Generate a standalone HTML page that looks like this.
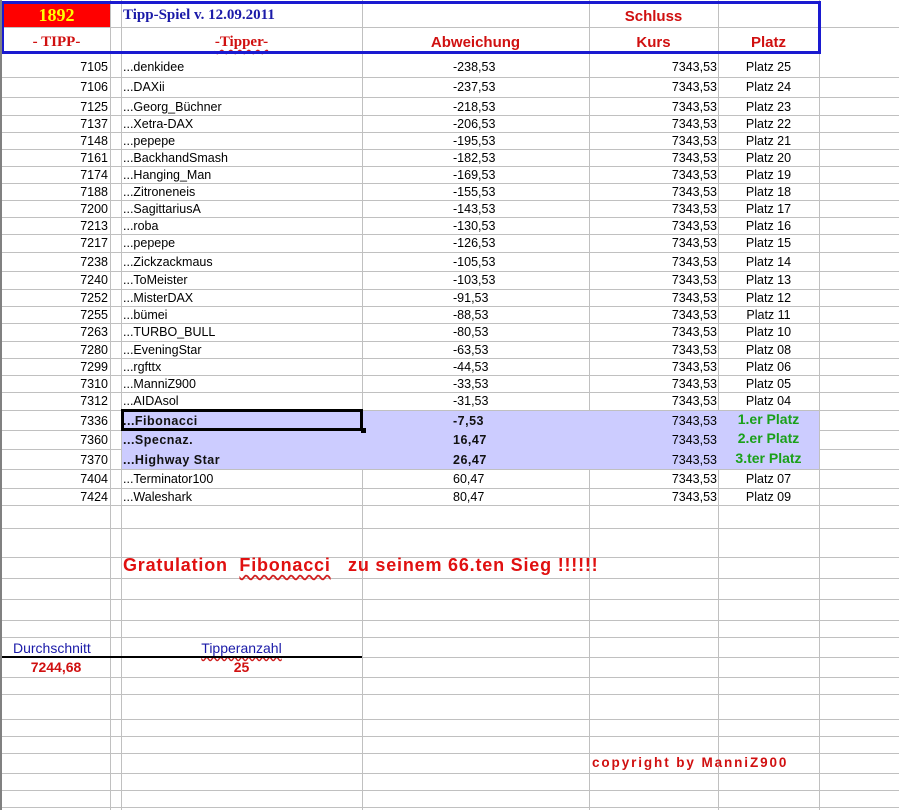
<!DOCTYPE html>
<html><head><meta charset="utf-8"><style>
*{margin:0;padding:0;box-sizing:border-box}
body{width:899px;height:810px;background:#fff;position:relative;overflow:hidden;font-family:"Liberation Sans",Arial,sans-serif;font-size:12.5px;color:#000}
.h{position:absolute;left:0;width:899px;height:1px;background:#c0c0c0}
.v{position:absolute;top:0;height:810px;width:1px;background:#c0c0c0}
.t{position:absolute;white-space:nowrap}
.row{position:absolute;left:0;width:899px}
.row .a{position:absolute;right:791px;text-align:right}
.row .b{position:absolute;left:123px}
.row .c{position:absolute;left:453px}
.row .d{position:absolute;right:182px;text-align:right}
.row .e{position:absolute;left:718px;width:101px;text-align:center}
.hl{background:#ccccff}
.bd{font-weight:bold;font-size:12.5px;letter-spacing:0.5px;color:#111}
.g{color:#1aa01a;font-weight:bold;font-size:14px}
.wavy{text-decoration:underline wavy #d02020;text-underline-offset:3px}
</style></head><body>
<div class="h" style="top:27px"></div>
<div class="h" style="top:77px"></div><div class="h" style="top:97px"></div><div class="h" style="top:115px"></div><div class="h" style="top:132px"></div><div class="h" style="top:149px"></div><div class="h" style="top:166px"></div><div class="h" style="top:183px"></div><div class="h" style="top:200px"></div><div class="h" style="top:217px"></div><div class="h" style="top:234px"></div><div class="h" style="top:252px"></div><div class="h" style="top:271px"></div><div class="h" style="top:289px"></div><div class="h" style="top:306px"></div><div class="h" style="top:323px"></div><div class="h" style="top:341px"></div><div class="h" style="top:358px"></div><div class="h" style="top:375px"></div><div class="h" style="top:392px"></div><div class="h" style="top:410px"></div><div class="h" style="top:430px"></div><div class="h" style="top:449px"></div><div class="h" style="top:469px"></div><div class="h" style="top:488px"></div><div class="h" style="top:505px"></div><div class="h" style="top:528px"></div><div class="h" style="top:557px"></div><div class="h" style="top:578px"></div><div class="h" style="top:599px"></div><div class="h" style="top:620px"></div><div class="h" style="top:637px"></div><div class="h" style="top:657px"></div><div class="h" style="top:677px"></div><div class="h" style="top:694px"></div><div class="h" style="top:719px"></div><div class="h" style="top:736px"></div><div class="h" style="top:753px"></div><div class="h" style="top:773px"></div><div class="h" style="top:790px"></div><div class="h" style="top:807px"></div>
<div class="v" style="left:110px"></div><div class="v" style="left:121px"></div><div class="v" style="left:362px"></div><div class="v" style="left:589px"></div><div class="v" style="left:718px"></div><div class="v" style="left:819px"></div>
<div style="position:absolute;left:0;top:0;width:2px;height:810px;background:#808080"></div>
<div class="hl" style="position:absolute;left:122px;top:411px;width:697px;height:58px"></div>
<div style="position:absolute;left:121px;top:409px;width:242px;height:22px;border:3px solid #000"></div>
<div style="position:absolute;left:361px;top:428px;width:5px;height:5px;background:#000"></div>
<div style="position:absolute;left:3px;top:3px;width:107px;height:24px;background:#f00"></div>
<div class="t" style="left:3px;top:3px;width:107px;text-align:center;line-height:24px;font-family:'Liberation Serif',serif;font-weight:bold;font-size:18px;color:#ffff00">1892</div>
<div class="t" style="left:123px;top:7px;font-family:'Liberation Serif',serif;font-weight:bold;font-size:15px;color:#1a1aa8">Tipp-Spiel v. 12.09.2011</div>
<div class="t" style="left:3px;top:34px;width:107px;text-align:center;font-family:'Liberation Serif',serif;font-weight:bold;font-size:15px;color:#d01010">- TIPP-</div>
<div class="t wavy" style="left:121px;top:34px;width:241px;text-align:center;font-family:'Liberation Serif',serif;font-weight:bold;font-size:15px;color:#d01010">-Tipper-</div>
<div class="t" style="left:362px;top:34px;width:227px;text-align:center;font-weight:bold;font-size:15px;color:#d01010">Abweichung</div>
<div class="t" style="left:589px;top:8px;width:129px;text-align:center;font-weight:bold;font-size:15px;color:#d01010">Schluss</div>
<div class="t" style="left:589px;top:34px;width:129px;text-align:center;font-weight:bold;font-size:15px;color:#d01010">Kurs</div>
<div class="t" style="left:718px;top:34px;width:101px;text-align:center;font-weight:bold;font-size:15px;color:#d01010">Platz</div>
<div style="position:absolute;left:2px;top:1px;width:819px;height:53px;border:3px solid #1a1ad0;border-left-width:2px"></div>
<div class="row" style="top:60px"><span class="a">7105</span><span class="b">...denkidee</span><span class="c">-238,53</span><span class="d">7343,53</span><span class="e">Platz 25</span></div>
<div class="row" style="top:80px"><span class="a">7106</span><span class="b">...DAXii</span><span class="c">-237,53</span><span class="d">7343,53</span><span class="e">Platz 24</span></div>
<div class="row" style="top:100px"><span class="a">7125</span><span class="b">...Georg_Büchner</span><span class="c">-218,53</span><span class="d">7343,53</span><span class="e">Platz 23</span></div>
<div class="row" style="top:117px"><span class="a">7137</span><span class="b">...Xetra-DAX</span><span class="c">-206,53</span><span class="d">7343,53</span><span class="e">Platz 22</span></div>
<div class="row" style="top:134px"><span class="a">7148</span><span class="b">...pepepe</span><span class="c">-195,53</span><span class="d">7343,53</span><span class="e">Platz 21</span></div>
<div class="row" style="top:151px"><span class="a">7161</span><span class="b">...BackhandSmash</span><span class="c">-182,53</span><span class="d">7343,53</span><span class="e">Platz 20</span></div>
<div class="row" style="top:168px"><span class="a">7174</span><span class="b">...Hanging_Man</span><span class="c">-169,53</span><span class="d">7343,53</span><span class="e">Platz 19</span></div>
<div class="row" style="top:185px"><span class="a">7188</span><span class="b">...Zitroneneis</span><span class="c">-155,53</span><span class="d">7343,53</span><span class="e">Platz 18</span></div>
<div class="row" style="top:202px"><span class="a">7200</span><span class="b">...SagittariusA</span><span class="c">-143,53</span><span class="d">7343,53</span><span class="e">Platz 17</span></div>
<div class="row" style="top:219px"><span class="a">7213</span><span class="b">...roba</span><span class="c">-130,53</span><span class="d">7343,53</span><span class="e">Platz 16</span></div>
<div class="row" style="top:236px"><span class="a">7217</span><span class="b">...pepepe</span><span class="c">-126,53</span><span class="d">7343,53</span><span class="e">Platz 15</span></div>
<div class="row" style="top:255px"><span class="a">7238</span><span class="b">...Zickzackmaus</span><span class="c">-105,53</span><span class="d">7343,53</span><span class="e">Platz 14</span></div>
<div class="row" style="top:273px"><span class="a">7240</span><span class="b">...ToMeister</span><span class="c">-103,53</span><span class="d">7343,53</span><span class="e">Platz 13</span></div>
<div class="row" style="top:291px"><span class="a">7252</span><span class="b">...MisterDAX</span><span class="c">-91,53</span><span class="d">7343,53</span><span class="e">Platz 12</span></div>
<div class="row" style="top:308px"><span class="a">7255</span><span class="b">...bümei</span><span class="c">-88,53</span><span class="d">7343,53</span><span class="e">Platz 11</span></div>
<div class="row" style="top:325px"><span class="a">7263</span><span class="b">...TURBO_BULL</span><span class="c">-80,53</span><span class="d">7343,53</span><span class="e">Platz 10</span></div>
<div class="row" style="top:343px"><span class="a">7280</span><span class="b">...EveningStar</span><span class="c">-63,53</span><span class="d">7343,53</span><span class="e">Platz 08</span></div>
<div class="row" style="top:360px"><span class="a">7299</span><span class="b">...rgfttx</span><span class="c">-44,53</span><span class="d">7343,53</span><span class="e">Platz 06</span></div>
<div class="row" style="top:377px"><span class="a">7310</span><span class="b">...ManniZ900</span><span class="c">-33,53</span><span class="d">7343,53</span><span class="e">Platz 05</span></div>
<div class="row" style="top:394px"><span class="a">7312</span><span class="b">...AIDAsol</span><span class="c">-31,53</span><span class="d">7343,53</span><span class="e">Platz 04</span></div>
<div class="row" style="top:414px"><span class="a">7336</span><span class="b bd">...Fibonacci</span><span class="c bd">-7,53</span><span class="d">7343,53</span><span class="e g" style="top:-3px">1.er Platz</span></div>
<div class="row" style="top:433px"><span class="a">7360</span><span class="b bd">...Specnaz.</span><span class="c bd">16,47</span><span class="d">7343,53</span><span class="e g" style="top:-3px">2.er Platz</span></div>
<div class="row" style="top:453px"><span class="a">7370</span><span class="b bd">...Highway Star</span><span class="c bd">26,47</span><span class="d">7343,53</span><span class="e g" style="top:-3px">3.ter Platz</span></div>
<div class="row" style="top:472px"><span class="a">7404</span><span class="b">...Terminator100</span><span class="c">60,47</span><span class="d">7343,53</span><span class="e">Platz 07</span></div>
<div class="row" style="top:490px"><span class="a">7424</span><span class="b">...Waleshark</span><span class="c">80,47</span><span class="d">7343,53</span><span class="e">Platz 09</span></div>
<div class="t" style="left:123px;top:555px;font-weight:bold;font-size:18px;letter-spacing:0.8px;color:#e01010">Gratulation&nbsp; <span class="wavy">Fibonacci</span>&nbsp;&nbsp; zu seinem 66.ten Sieg !!!!!!</div>
<div class="t" style="left:13px;top:640px;font-size:14px;color:#1a1aa8">Durchschnitt</div>
<div class="t wavy" style="left:121px;top:640px;width:241px;text-align:center;font-size:14px;color:#1a1aa8">Tipperanzahl</div>
<div style="position:absolute;left:2px;top:656px;width:360px;height:2px;background:#000"></div>
<div class="t" style="left:2px;top:659px;width:108px;text-align:center;font-weight:bold;font-size:14px;color:#d01010">7244,68</div>
<div class="t" style="left:121px;top:659px;width:241px;text-align:center;font-weight:bold;font-size:14px;color:#d01010">25</div>
<div class="t" style="left:592px;top:755px;font-weight:bold;font-size:13.5px;letter-spacing:1.9px;color:#d01010">copyright by ManniZ900</div>
</body></html>
